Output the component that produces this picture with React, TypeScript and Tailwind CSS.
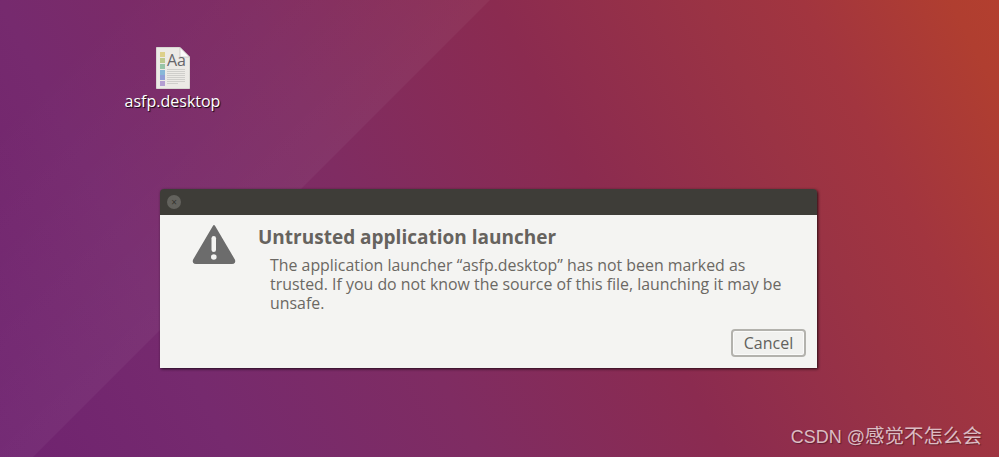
const FONT = 'font-["Open_Sans","Noto_Sans",sans-serif]';

function DocumentIcon() {
  return (
    <svg width="34" height="42" viewBox="0 0 34 42" aria-hidden="true">
      <path d="M0.5 0.5H24L33.5 10V41.5H0.5Z" fill="#eceae6" stroke="#d8d6d2" strokeWidth="1" />
      <path d="M24 0.5V10H33.5Z" fill="#fbfbfb" stroke="#bdbbb6" strokeWidth="0.6" />
      <rect x="4" y="5" width="5" height="5" fill="#ddd08a" />
      <rect x="4" y="11" width="5" height="5" fill="#bcc98f" />
      <rect x="4" y="17" width="5" height="5" fill="#97c4a8" />
      <rect x="4" y="23" width="5" height="5" fill="#88b7d8" />
      <rect x="4" y="28" width="5" height="5" fill="#919fd8" />
      <rect x="4" y="34" width="5" height="5" fill="#b49fd2" />
      <text x="11" y="19" fontFamily="Open Sans, sans-serif" fontSize="16" fill="#66666a">
        Aa
      </text>
      {[22, 24, 26, 28, 30, 32, 34, 36].map((y) => (
        <rect key={y} x="11" y={y} width={y === 36 ? 11 : 18} height="1" fill="#cfcecb" />
      ))}
    </svg>
  );
}

function WarningIcon() {
  return (
    <svg width="46" height="43" viewBox="0 0 46 43" aria-hidden="true">
      <path
        d="M23 3 L43 37 Q44 40 41 40 H5 Q2 40 3 37 Z"
        fill="#6c6c6c"
        stroke="#6c6c6c"
        strokeWidth="2"
        strokeLinejoin="round"
      />
      <rect x="20.5" y="13" width="4.5" height="16" rx="2.25" fill="#f4f4f2" />
      <circle cx="22.8" cy="34" r="2.8" fill="#f4f4f2" />
    </svg>
  );
}

export default function App() {
  return (
    <div
      className={`${FONT} relative h-[457px] w-[999px] overflow-hidden bg-[linear-gradient(63deg,#6f2370_0%,#762a6e_19%,#7f2c62_39%,#8b2b50_59%,#9a3344_76%,#a2353f_84%,#b03e30_96%,#b33f2f_100%)]`}
    >
      {/* wallpaper facet, edge runs along x + y = 490 */}
      <div className="absolute inset-0 bg-[linear-gradient(135deg,rgba(255,255,255,0)_8%,rgba(255,255,255,0.045)_33.6%,rgba(255,255,255,0)_33.7%)]" />

      <div className="absolute left-[120px] top-[47px] flex w-[105px] flex-col items-center">
        <DocumentIcon />
        <span className="mt-[1px] text-[16px] leading-[22px] text-white [text-shadow:1px_1px_1px_rgba(0,0,0,0.9)]">
          asfp.desktop
        </span>
      </div>

      <div className="absolute left-[160px] top-[189px] flex h-[179px] w-[657px] flex-col overflow-hidden rounded-t-[4px] shadow-[1px_1px_3px_rgba(0,0,0,0.75)]">
        <div className="flex h-[26px] shrink-0 items-center bg-[#3e3d38] pl-[7px]">
          <div className="flex h-[14px] w-[14px] items-center justify-center rounded-full bg-[#63625d] text-[10px] leading-none text-[#35342f]">
            ×
          </div>
        </div>
        <div className="flex min-h-0 flex-1 flex-col bg-[#f4f4f2] pl-[31px] pr-[11px]">
          <div className="flex gap-[21px]">
            <div className="pt-[8px]">
              <WarningIcon />
            </div>
            <div className="pt-[9px]">
              <h1 className="text-[19px] font-bold leading-[27px] text-[#66635e]">
                Untrusted application launcher
              </h1>
              <p className="mt-[5px] w-[540px] pl-[12px] text-[15.9px] leading-[19px] text-[#6b6863]">
                The application launcher “asfp.desktop” has not been marked as trusted. If you do
                not know the source of this file, launching it may be unsafe.
              </p>
            </div>
          </div>
          <div className="mt-auto flex justify-end pb-[11px]">
            <button className="h-[28px] w-[75px] rounded-[4px] border-2 border-[#b3b2ad] bg-[#f1f1ef] text-[16px] leading-none text-[#62615d] shadow-[inset_0_0_0_1px_#fafaf9]">
              Cancel
            </button>
          </div>
        </div>
      </div>

      <span className='absolute bottom-[8px] right-[17px] font-["Liberation_Sans","Noto_Sans_CJK_SC",sans-serif] text-[18px] leading-[24px] text-[#dcbcc3] [text-shadow:1px_1px_1px_rgba(0,0,0,0.35)]'>
        CSDN @<span className="text-[19.5px]">感觉不怎么会</span>
      </span>
    </div>
  );
}
